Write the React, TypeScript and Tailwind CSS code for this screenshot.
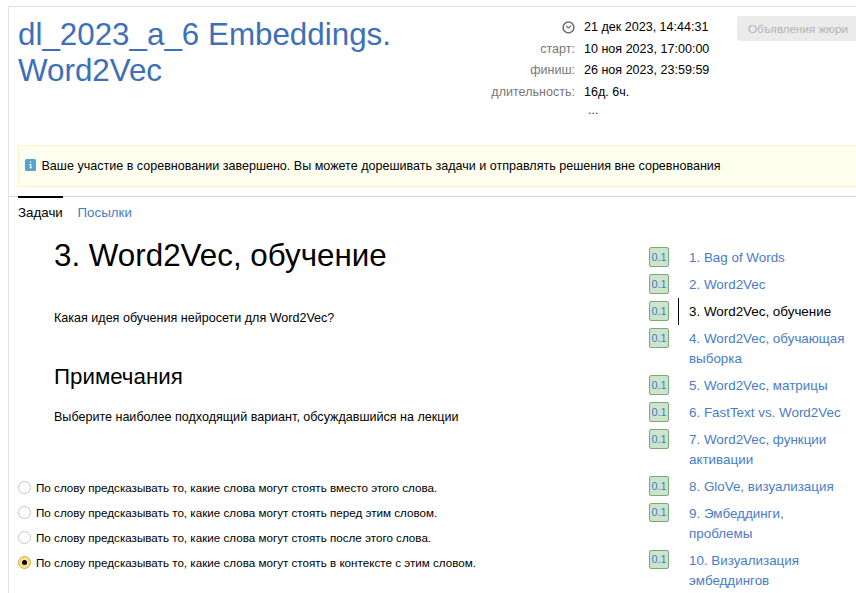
const facts = [
  { label: 'старт:', value: '10 ноя 2023, 17:00:00' },
  { label: 'финиш:', value: '26 ноя 2023, 23:59:59' },
  { label: 'длительность:', value: '16д. 6ч.' },
];

const problems = [
  ['1. Bag of Words'],
  ['2. Word2Vec'],
  ['3. Word2Vec, обучение'],
  ['4. Word2Vec, обучающая', 'выборка'],
  ['5. Word2Vec, матрицы'],
  ['6. FastText vs. Word2Vec'],
  ['7. Word2Vec, функции', 'активации'],
  ['8. GloVe, визуализация'],
  ['9. Эмбеддинги,', 'проблемы'],
  ['10. Визуализация', 'эмбеддингов'],
];

const answers = [
  'По слову предсказывать то, какие слова могут стоять вместо этого слова.',
  'По слову предсказывать то, какие слова могут стоять перед этим словом.',
  'По слову предсказывать то, какие слова могут стоять после этого слова.',
  'По слову предсказывать то, какие слова могут стоять в контексте с этим словом.',
];

function Clock() {
  return (
    <svg className="h-[13px] w-[13px]" viewBox="0 0 13 13" fill="none" stroke="#6b6b70" strokeWidth="1.5">
      <circle cx="6.5" cy="6.5" r="5.4" />
      <path d="M4 4.9 6.2 7 9 4.8" strokeWidth="1.1" />
    </svg>
  );
}

function Header() {
  return (
    <header className="flex h-[138px] pl-[9px]">
      <h1 className="w-[440px] shrink-0 pt-[10px] text-[31.35px] leading-[36px] text-[#3d70b8]">
        dl_2023_a_6 Embeddings.
        <br />
        Word2Vec
      </h1>
      <div className="w-[279px] shrink-0 pt-[10px] text-[12.55px] leading-[21.5px]">
        <div className="flex">
          <div className="flex w-[117px] items-center justify-end">
            <Clock />
          </div>
          <div className="pl-[9px]">21 дек 2023, 14:44:31</div>
        </div>
        {facts.map((f) => (
          <div key={f.label} className="flex">
            <div className="w-[117px] text-right text-[#777]">{f.label}</div>
            <div className="pl-[9px]">{f.value}</div>
          </div>
        ))}
        <div className="pl-[130px] leading-[15px] text-[#333]">...</div>
      </div>
      <button className="mt-[9px] h-[25px] w-[119px] shrink-0 rounded-l-[3px] bg-[#ebebeb] pt-px pl-[11px] text-left text-[11.65px] whitespace-nowrap text-[#b3b3b3]">
        Объявления жюри
      </button>
    </header>
  );
}

function Notice() {
  return (
    <div className="ml-[9px] flex h-[42px] items-center border border-r-0 border-[#fbf3cf] bg-[#fffff0] pl-[6px] text-[12.55px]">
      <svg className="mb-[2px] h-[12px] w-[11px]" viewBox="0 0 11 12">
        <rect width="11" height="12" rx="1.5" fill="#55a3cf" />
        <path d="M5 2.5h1.3v1.2H5zM4.2 5h2.1v3.6H7v.7H4.2v-.7H5V5.7h-.8z" fill="#fff" />
      </svg>
      <span className="pl-[5.5px] whitespace-nowrap">
        Ваше участие в соревновании завершено. Вы можете дорешивать задачи и отправлять решения вне соревнования
      </span>
    </div>
  );
}

function Tabs() {
  return (
    <nav className="mt-[9px] flex h-[28px] border-t border-[#d5d5d5] pl-[9px] text-[13.35px] leading-[31px]">
      <a className="-mt-px w-[45px] border-t-2 border-black leading-[30px]">Задачи</a>
      <a className="pl-[14.5px] text-[#4a7cc7]">Посылки</a>
    </nav>
  );
}

function Statement() {
  return (
    <main className="w-[640px] whitespace-nowrap">
      <div className="h-[251px] pl-[45px] text-[12.55px]">
        <h2 className="pt-[14px] text-[31.35px] leading-[36px]">3. Word2Vec, обучение</h2>
        <p className="pt-[34px] leading-[20px]">Какая идея обучения нейросети для Word2Vec?</p>
        <h3 className="pt-[34px] text-[22.3px] leading-[30px]">Примечания</h3>
        <p className="pt-[15px] leading-[20px]">Выберите наиболее подходящий вариант, обсуждавшийся на лекции</p>
      </div>
      <div className="pl-[9px] text-[11.65px]">
        {answers.map((text, i) => (
          <label key={text} className="flex h-[25px] items-center">
            {i === 3 ? (
              <span className="flex h-[13px] w-[13px] items-center justify-center rounded-full border border-[#c9ac52] bg-[#ffe08a]">
                <span className="h-[5px] w-[5px] rounded-full bg-black" />
              </span>
            ) : (
              <span className="h-[13px] w-[13px] rounded-full border border-[#c6c6c6] bg-white" />
            )}
            <span className="pt-px pl-[5px]">{text}</span>
          </label>
        ))}
      </div>
    </main>
  );
}

function ProblemList() {
  return (
    <aside className="pt-[20px] text-[13.4px] leading-[20px] whitespace-nowrap text-[#4a7cc7]">
      {problems.map((lines, i) => (
        <div key={lines[0]} className="flex">
          <div className="w-[29px] pt-[3px]">
            <div
              className={
                i < 8
                  ? 'h-[20px] w-[20px] rounded-[2px] border border-[#79ab79] bg-[#cce3cc] text-center text-[10.9px] leading-[18px]'
                  : 'h-[19px] w-[20px] rounded-[2px] border border-[#79ab79] bg-[#cce3cc] text-center text-[10.9px] leading-[17px]'
              }
            >
              0.1
            </div>
          </div>
          <div
            className={
              i === 2
                ? 'border-l border-black pt-[4px] pb-[3px] pl-[10px] text-black'
                : 'border-l border-transparent pt-[4px] pb-[3px] pl-[10px]'
            }
          >
            {lines.map((line) => (
              <div key={line}>{line}</div>
            ))}
          </div>
        </div>
      ))}
    </aside>
  );
}

export default function App() {
  return (
    <div className="h-[593px] w-[856px] overflow-hidden bg-white pt-[6px] pl-[8px] font-['Liberation_Sans',Arial,sans-serif] text-black">
      <div className="h-[587px] overflow-hidden border-t border-l border-[#e2e2e2]">
        <Header />
        <Notice />
        <Tabs />
        <div className="flex">
          <Statement />
          <ProblemList />
        </div>
      </div>
    </div>
  );
}
